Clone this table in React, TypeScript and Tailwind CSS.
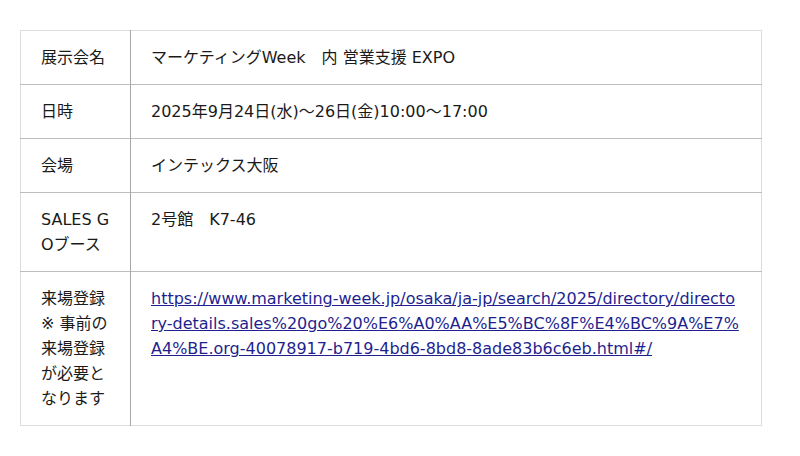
import React from "react";

const rows: { label: React.ReactNode; value: React.ReactNode }[] = [
  { label: "展示会名", value: "マーケティングWeek　内 営業支援 EXPO" },
  { label: "日時", value: "2025年9月24日(水)～26日(金)10:00～17:00" },
  { label: "会場", value: "インテックス大阪" },
  { label: "SALES GOブース", value: "2号館　K7-46" },
  {
    label: "来場登録※ 事前の来場登録が必要となります",
    value: (
      <a
        href="#"
        className="text-[#1f1f8f] underline"
      >
        https://www.marketing-week.jp/osaka/ja-jp/search/2025/directory/directory-details.sales%20go%20%E6%A0%AA%E5%BC%8F%E4%BC%9A%E7%A4%BE.org-40078917-b719-4bd6-8bd8-8ade83b6c6eb.html#/
      </a>
    ),
  },
];

export default function App() {
  return (
    <div
      className="w-[800px] h-[456px] bg-white pt-[30px] pl-[20px]"
      style={{ fontFamily: '"DejaVu Sans", "Noto Sans CJK JP", sans-serif' }}
    >
      <table className="w-[742px] border-collapse border border-[#dcdcdc] text-[16px] leading-[25px] text-[#1a1a1a] table-fixed">
        <colgroup>
          <col className="w-[110px]" />
          <col />
        </colgroup>
        <tbody>
          {rows.map((r, i) => (
            <tr key={i} className="border-t border-[#bdbdbd] first:border-t-[#dcdcdc]">
              <td className="align-top px-[20px] py-[14px] border-r border-[#a8a8a8] break-all">
                {r.label}
              </td>
              <td className="align-top px-[20px] py-[14px] break-all">{r.value}</td>
            </tr>
          ))}
        </tbody>
      </table>
    </div>
  );
}
